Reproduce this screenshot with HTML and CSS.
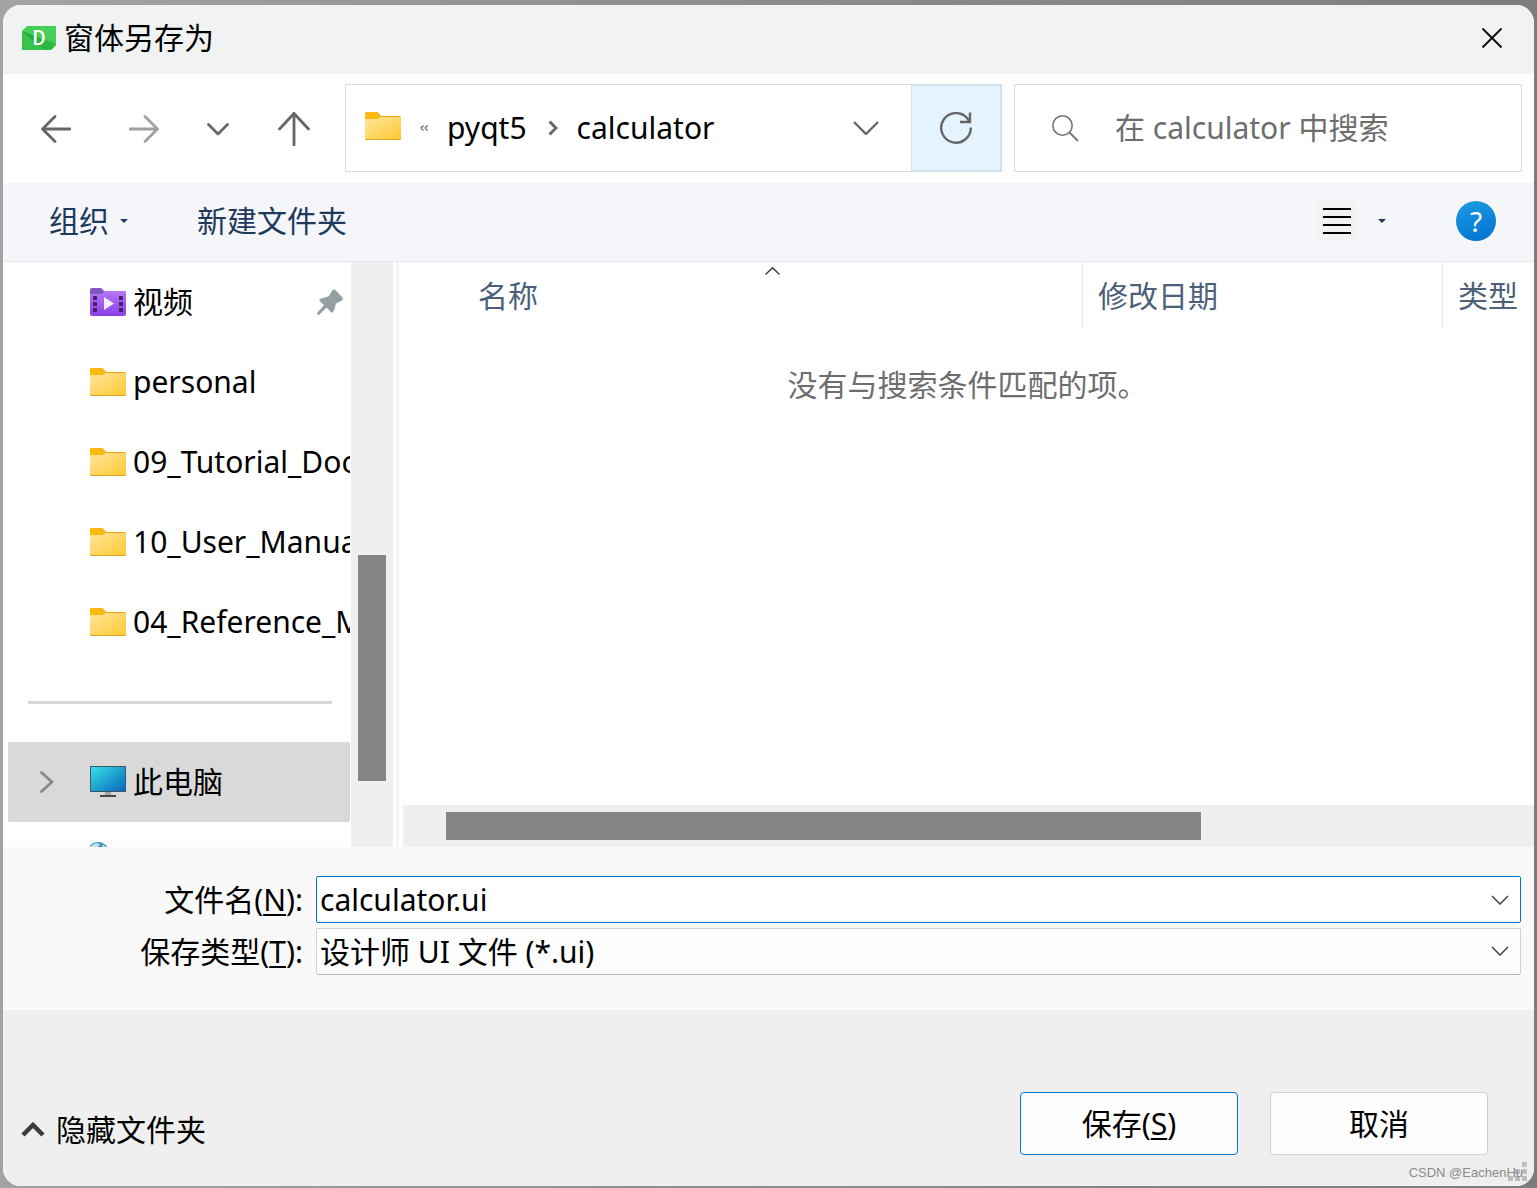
FILE: index.html
```html
<!DOCTYPE html>
<html lang="zh-CN">
<head>
<meta charset="utf-8">
<title>窗体另存为</title>
<link rel="stylesheet" href="styles.css">
</head>
<body>
<svg class="defs" width="0" height="0" aria-hidden="true">
  <defs>
    <linearGradient id="folder-face" x1="0" y1="0" x2="1" y2="1">
      <stop offset="0" stop-color="#ffe69c"/><stop offset="1" stop-color="#ffc830"/>
    </linearGradient>
    <linearGradient id="video-face" x1="0" y1="0" x2="0" y2="1">
      <stop offset="0" stop-color="#b877f5"/><stop offset="1" stop-color="#8a3fe6"/>
    </linearGradient>
    <linearGradient id="screen-face" x1="0" y1="0" x2="1" y2="1">
      <stop offset="0" stop-color="#37e2e6"/><stop offset="1" stop-color="#0665bd"/>
    </linearGradient>
    <linearGradient id="app-face" x1="0" y1="0" x2="1" y2="0">
      <stop offset="0" stop-color="#22a638"/><stop offset="1" stop-color="#30bd44"/>
    </linearGradient>
    <symbol id="folder" viewBox="0 0 36 28">
      <path d="M0 10V2Q0 0 2 0H11Q13 0 14 1.500L16 4H34Q36 4 36 6V10Z" fill="#e8a317"/>
      <path d="M0 8V2Q0 0 2 0H11Q13 0 14 1.500L15.500 4L13 6.500Q12 7 10 7H0Z" fill="#fdb913"/>
      <path d="M0 7H11Q13 7 14 6L15 5H35Q36 5 36 6V27Q36 28 35 28H1Q0 28 0 27Z" fill="url(#folder-face)"/>
      <path d="M0.500 27.500H35.500" stroke="#e3a21f"/>
    </symbol>
    <symbol id="chevron-down" viewBox="0 0 18 10">
      <path d="M1 1L9 9L17 1" fill="none" stroke="currentColor" stroke-width="1.500"/>
    </symbol>
  </defs>
</svg>

<div class="dialog">
  <header class="titlebar">
    <svg class="app-icon" width="34" height="24" viewBox="0 0 34 24" aria-hidden="true">
      <path d="M5 0H34V19L29 24H0V5Z" fill="#45cf58"/>
      <path d="M0 5L34 18V19L29 24H0Z" fill="url(#app-face)"/>
      <path d="M0 5L22 24H0Z" fill="#38c44c"/>
      <text x="17" y="19" text-anchor="middle" class="app-letter">D</text>
    </svg>
    <h1 class="title">窗体另存为</h1>
    <button class="close" aria-label="关闭">
      <svg width="20" height="20" viewBox="0 0 20 20"><path d="M0.500 0.500L19.500 19.500M19.500 0.500L0.500 19.500" stroke="#111" stroke-width="2"/></svg>
    </button>
  </header>

  <nav class="navbar">
    <div class="history">
      <button class="wide" aria-label="后退">
        <svg width="30" height="28" viewBox="0 0 30 28"><path d="M29 14H1.500M14 1.500L1.500 14L14 26.500" class="nav-stroke"/></svg>
      </button>
      <button class="wide dim" aria-label="前进">
        <svg width="30" height="28" viewBox="0 0 30 28"><path d="M1 14H28.500M16 1.500L28.500 14L16 26.500" class="nav-stroke"/></svg>
      </button>
      <button class="narrow" aria-label="最近位置">
        <svg width="22" height="13" viewBox="0 0 22 13"><path d="M1.500 1.500L11 11L20.500 1.500" class="nav-stroke"/></svg>
      </button>
      <button class="up" aria-label="向上">
        <svg width="32" height="34" viewBox="0 0 32 34"><path d="M16 33V1.500M1.500 17L16 1.500L30.500 17" class="nav-stroke"/></svg>
      </button>
    </div>
    <div class="address">
      <svg class="address-icon" width="36" height="28" aria-hidden="true"><use href="#folder"/></svg>
      <svg class="overflow-mark" width="8" height="6" viewBox="0 0 8 6" aria-hidden="true"><path d="M3.500 0.500L1 3L3.500 5.500M7.500 0.500L5 3L7.500 5.500" fill="none" stroke="#666" stroke-width="1.200"/></svg>
      <a class="crumb" href="#">pyqt5</a>
      <svg class="crumb-mark" width="10" height="16" viewBox="0 0 10 16" aria-hidden="true"><path d="M1.500 1.500L8 8L1.500 14.500" fill="none" stroke="#666" stroke-width="3"/></svg>
      <a class="crumb" href="#">calculator</a>
      <button class="address-drop" aria-label="历史记录">
        <svg width="26" height="14" viewBox="0 0 26 14"><path d="M1 1L13 13L25 1" fill="none" stroke="#666" stroke-width="2.400"/></svg>
      </button>
      <button class="refresh" aria-label="刷新">
        <svg width="32" height="32" viewBox="0 0 32 32"><path d="M30.800 15.500A14.800 14.800 0 1 1 27 6L30 10M30 0.500V10H20" fill="none" stroke="#666" stroke-width="2.400"/></svg>
      </button>
    </div>
    <label class="search">
      <svg width="27" height="27" viewBox="0 0 27 27" aria-hidden="true"><circle cx="10.500" cy="10.500" r="9.700" fill="none" stroke="#777" stroke-width="1.600"/><path d="M17.500 17.500L26 26" stroke="#777" stroke-width="2"/></svg>
      <input type="search" placeholder="在 calculator 中搜索" aria-label="搜索">
    </label>
  </nav>

  <div class="toolbar">
    <button class="organize">组织 <span class="triangle"></span></button>
    <button class="new-folder">新建文件夹</button>
    <button class="view" aria-label="视图">
      <span class="view-icon"><svg width="28" height="26" viewBox="0 0 28 26"><path d="M0 1H28M0 9H28M0 17H28M0 25H28" stroke="#000" stroke-width="2"/></svg></span>
      <span class="triangle"></span>
    </button>
    <button class="help" aria-label="帮助">?</button>
  </div>

  <main class="browser">
    <ul class="places">
      <li class="place">
        <svg width="36" height="28" viewBox="0 0 36 28" aria-hidden="true">
          <path d="M0 8V2Q0 0 2 0H10Q12 0 13 2L14 3H34Q36 3 36 5V8Z" fill="#7f57bd"/>
          <path d="M0 6H11Q13 6 14 4L15 3H34Q36 3 36 5V26Q36 28 34 28H2Q0 28 0 26Z" fill="url(#video-face)"/>
          <path d="M3 8h4v4h-4zM3 14h4v4h-4zM3 20h4v4h-4zM29 8h4v4h-4zM29 14h4v4h-4zM29 20h4v4h-4z" fill="#452170"/>
          <path d="M14 9L24 15.500L14 22Z" fill="#f2eef6"/>
        </svg>
        <a href="#">视频</a>
        <svg class="pin" width="26" height="26" viewBox="0 0 26 26" aria-hidden="true"><path d="M15.500 1Q17 0 18.500 1.200L25 8Q26.500 10 25 11.500L19 14.500L17 21.500L15 24L9.500 18.500L2 26L0 25.500L0.500 23.500L7 16L2 11.500L4 9.500L11.500 7.500Z" fill="#949ea5"/></svg>
      </li>
      <li class="place"><svg width="36" height="28" aria-hidden="true"><use href="#folder"/></svg><a href="#">personal</a></li>
      <li class="place"><svg width="36" height="28" aria-hidden="true"><use href="#folder"/></svg><a href="#">09_Tutorial_Doc</a></li>
      <li class="place"><svg width="36" height="28" aria-hidden="true"><use href="#folder"/></svg><a href="#">10_User_Manual</a></li>
      <li class="place"><svg width="36" height="28" aria-hidden="true"><use href="#folder"/></svg><a href="#">04_Reference_M</a></li>
      <li class="divider" role="separator"></li>
      <li class="place selected">
        <svg class="expander" width="14" height="22" viewBox="0 0 14 22" aria-hidden="true"><path d="M1.500 1.500L12 11L1.500 20.500" fill="none" stroke="#888" stroke-width="2.800" stroke-linecap="round"/></svg>
        <svg width="36" height="32" viewBox="0 0 36 32" aria-hidden="true">
          <path d="M15 26H21V30H15Z" fill="#9aa3a9"/>
          <path d="M10 29H26V31H10Z" fill="#41494f"/>
          <rect x="0.500" y="0.500" width="35" height="25" fill="url(#screen-face)" stroke="#3f5566"/>
        </svg>
        <a href="#">此电脑</a>
      </li>
      <li class="place">
        <svg width="36" height="40" viewBox="0 0 36 40" aria-hidden="true">
          <circle cx="8" cy="11" r="11" fill="#3f93b8"/>
          <path d="M0 5Q3 1 8 1L10 3L6 6H1ZM12 2L16 5L13 6Z" fill="#c5e3ee"/>
        </svg>
      </li>
    </ul>
    <div class="scroll-v"><div class="thumb-v"></div></div>
    <div class="splitter"></div>
    <section class="files">
      <table>
        <colgroup><col><col class="col-date"><col class="col-type"></colgroup>
        <thead>
          <tr>
            <th class="name" scope="col">名称<svg class="sort" width="15" height="8" viewBox="0 0 15 8" aria-hidden="true"><path d="M0.500 7.500L7.500 0.700L14.500 7.500" fill="none" stroke="#333" stroke-width="1.300"/></svg></th>
            <th scope="col">修改日期</th>
            <th scope="col">类型</th>
          </tr>
        </thead>
        <tbody><tr><td colspan="3">没有与搜索条件匹配的项。</td></tr></tbody>
      </table>
      <div class="scroll-h"><div class="thumb-h"></div></div>
    </section>
  </main>

  <form class="fields">
    <label for="file-name">文件名(<u>N</u>):</label>
    <div class="combo active">
      <input id="file-name" type="text" value="calculator.ui">
      <button type="button" aria-label="以前的文件名"><svg width="18" height="10"><use href="#chevron-down"/></svg></button>
    </div>
    <label for="file-type">保存类型(<u>T</u>):</label>
    <div class="combo">
      <select id="file-type"><option>设计师 UI 文件 (*.ui)</option></select>
      <svg class="select-mark" width="18" height="10" aria-hidden="true"><use href="#chevron-down"/></svg>
    </div>
  </form>

  <footer class="actions">
    <button class="hide-folders">
      <svg width="24" height="16" viewBox="0 0 24 16" aria-hidden="true"><path d="M2 13L12 3L22 13" fill="none" stroke="#3c3c3c" stroke-width="4.500"/></svg>
      隐藏文件夹
    </button>
    <button class="push primary">保存(<u>S</u>)</button>
    <button class="push">取消</button>
    <svg class="grip" width="19" height="19" viewBox="0 0 19 19" aria-hidden="true"><path d="M14 0h5v5h-5zM7 7h5v5h-5zM14 7h5v5h-5zM0 14h5v5h-5zM7 14h5v5h-5zM14 14h5v5h-5z" fill="#bdbdbd"/></svg>
    <span class="watermark">CSDN @EachenHu</span>
  </footer>
</div>
</body>
</html>
```

FILE: styles.css
```css
* { box-sizing: border-box; }

body {
  margin: 0;
  height: 100vh;
  padding: 5px 3px 2px;
  background: linear-gradient(90deg, #a3a3a3, #8c8c8c 50%, #7d7d7d);
  font-family: "Noto Sans", "Noto Sans CJK SC", sans-serif;
  font-size: 30px;
  line-height: 40px;
  color: #000;
}

.defs { position: absolute; }

svg { display: block; flex: none; }

button, input, select {
  margin: 0;
  padding: 0;
  border: 0;
  background: none;
  color: inherit;
  font: inherit;
}

button {
  display: flex;
  align-items: center;
  justify-content: center;
  white-space: nowrap;
}

input:focus, select:focus { outline: none; }

a { color: inherit; text-decoration: none; }

u { text-decoration-thickness: 2px; text-underline-offset: 3px; }

.dialog {
  display: flex;
  flex-direction: column;
  height: 100%;
  overflow: hidden;
  border-radius: 18px;
  background: #fff;
}

/* Title bar */
.titlebar {
  display: flex;
  align-items: center;
  flex: none;
  height: 69px;
  padding: 0 32px 4px 19px;
  background: #f1f3f2;
}
.app-letter { font: 500 20px Roboto, sans-serif; fill: #fff; }
.title { flex: 1; margin: 0 0 0 8px; font-size: 30px; font-weight: 400; }

/* Navigation row */
.navbar {
  display: grid;
  grid-template-columns: 333px minmax(0, 669fr) minmax(0, 508fr);
  flex: none;
  height: 109px;
  padding: 10px 12px 11px 9px;
}
.history { display: flex; padding-top: 2px; color: #666; }
.history .wide { width: 88px; }
.history .narrow { width: 60px; }
.history .up { width: 92px; }
.history .dim { color: #a0a0a0; }
.nav-stroke { fill: none; stroke: currentColor; stroke-width: 2.8px; stroke-linecap: round; stroke-linejoin: round; }

.address, .search { display: flex; align-items: center; border: 1px solid #d9d9d9; }
.address { margin-right: 12px; padding-left: 19px; }
.address-icon { margin-bottom: 4px; }
.overflow-mark { margin: 0 19px; }
.crumb-mark { margin: 0 19px 0 21px; }
.address-drop { margin-left: auto; width: 90px; height: 100%; }
.refresh {
  width: 90px;
  height: 100%;
  border: 1px solid #cce8ff;
  background: #e5f3ff;
}
.search { padding: 0 20px 0 37px; }
.search input { flex: 1; min-width: 0; margin-left: 36px; height: 40px; }
.search input::placeholder { color: #6d6d6d; opacity: 1; }

/* Command bar */
.toolbar {
  display: flex;
  align-items: center;
  flex: none;
  height: 79px;
  padding: 0 38px 2px 46px;
  border-bottom: 1px solid #e5e7ea;
  background: #f4f6f9;
  color: #1e395b;
}
.triangle {
  border: 4px solid transparent;
  border-top-color: #1e395b;
  border-bottom: 0;
}
.organize { gap: 11px; }
.new-folder { margin-left: 69px; }
.view { gap: 21px; margin-left: auto; }
.view-icon { padding: 7px 6px; border-radius: 4px; background: #f2f2f2; }
.help {
  width: 40px;
  height: 40px;
  margin-left: 70px;
  border-radius: 50%;
  background: linear-gradient(160deg, #1e9de3, #0070d2);
  color: #fff;
  font-size: 28px;
}

/* Places tree and file list */
.browser { display: flex; flex: 1 1 0; min-height: 0; overflow: hidden; }
.places {
  flex: none;
  width: 348px;
  margin: 0;
  padding: 0 1px 0 5px;
  list-style: none;
  overflow: hidden;
}
.place {
  display: flex;
  align-items: center;
  height: 80px;
  padding-left: 82px;
  overflow: hidden;
  white-space: nowrap;
}
.place a { margin-left: 7px; }
.pin { margin: 0 7px 0 auto; }
.selected { padding-left: 32px; border-radius: 2px; background: #d9d9d9; }
.expander { margin-right: 36px; }
.divider { height: 80px; padding: 39px 18px 38px 20px; background: #d6d6d6 content-box; }
.scroll-v { flex: none; width: 42px; padding: 293px 7px 0; background: #efefef; }
.thumb-v { height: 226px; background: #858585; }
.splitter { flex: none; width: 10px; border: solid #fff; border-width: 0 4px 0 3px; background: #f5f5f5; }

.files { display: flex; flex-direction: column; flex: 1; min-width: 0; }
table { width: 100%; table-layout: fixed; border-collapse: separate; border-spacing: 0; }
.col-date { width: 360px; }
.col-type { width: 91px; }
th {
  height: 65px;
  padding: 2px 0 0 15px;
  border-right: 1px solid #e5e5e5;
  color: #4c607a;
  font-weight: 400;
  text-align: left;
  white-space: nowrap;
}
th:last-child { border-right: 0; }
th.name { position: relative; padding-left: 75px; }
.sort { position: absolute; top: 5px; left: 362px; }
td { padding: 38px 2px 0 0; color: #6d6d6d; text-align: center; }
.scroll-h { margin-top: auto; padding: 7px 333px 7px 43px; background: #efefef; }
.thumb-h { height: 28px; background: #858585; }

/* File name and type */
.fields {
  display: grid;
  grid-template-columns: 300px minmax(0, 1fr);
  gap: 5px 13px;
  flex: none;
  padding: 29px 13px 35px 0;
  background: #f9f9f9;
}
.fields label { padding-top: 4px; text-align: right; }
.combo {
  display: flex;
  position: relative;
  height: 47px;
  border: 1px solid #cfcfcf;
  border-bottom-color: #b8b8b8;
  border-radius: 2px;
  background: #fdfdfd;
  color: #000;
}
.combo.active { border-color: #0078d4; background: #fff; }
.combo input, .combo select { flex: 1; min-width: 0; padding-left: 3px; appearance: none; }
.combo button { width: 41px; color: #444; }
.select-mark { position: absolute; top: 17px; right: 11px; color: #444; pointer-events: none; }

/* Bottom row */
.actions {
  display: flex;
  align-items: flex-start;
  position: relative;
  flex: none;
  height: 176px;
  padding: 82px 46px 0 18px;
  background: #efefef;
}
.hide-folders { gap: 11px; margin: 18px auto 0 0; }
.push {
  width: 218px;
  height: 63px;
  margin-left: 32px;
  border: 1px solid #d0d0d0;
  border-radius: 4px;
  background: #fdfdfd;
}
.push.primary { border-color: #0078d4; }
.grip { position: absolute; right: 7px; bottom: 5px; }
.watermark {
  position: absolute;
  right: 11px;
  bottom: 5px;
  color: #8a8a8a;
  font: 13px/16px "Liberation Sans", sans-serif;
}
```
